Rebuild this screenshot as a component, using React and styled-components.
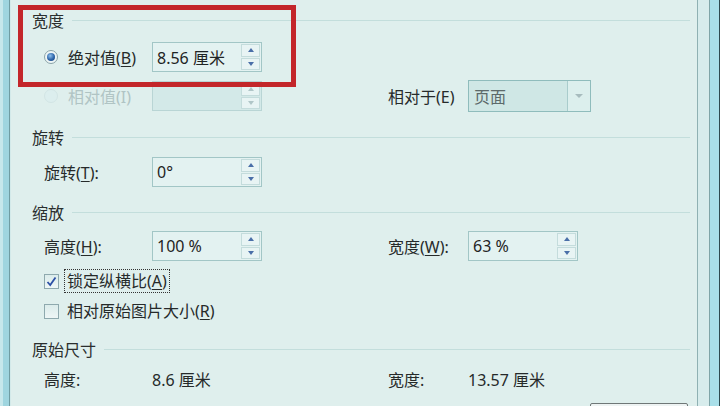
import styled, { createGlobalStyle } from 'styled-components';

const GlobalStyle = createGlobalStyle`
  html, body {
    margin: 0;
    padding: 0;
    overflow: hidden;
  }
  body {
    font-family: "Noto Sans", "Noto Sans CJK SC", sans-serif;
    color: #262a2a;
  }
`;

const Page = styled.div`
  width: 720px;
  height: 406px;
  display: flex;
  background: #dfefed;
  overflow: hidden;
`;

const LeftFrame = styled.div`
  width: 11px;
  flex: none;
  background: linear-gradient(to right, #c6e7eb 0 3px, #9fd5df 3px 9px, #6f9ca2 9px 10px, #d3eaea 10px);
`;

const RightFrame = styled.div`
  width: 23px;
  flex: none;
  background: linear-gradient(to right, #8fb1b3 0 1px, #d7ecec 1px 12px, #7fa5a8 12px 13px, #a9dfe9 13px 22px, #2e4a50 22px);
`;

const Panel = styled.div`
  position: relative;
  flex: 1;
  padding: 8px 7px 0 21px;
  display: flex;
  flex-direction: column;
  font-size: 16px;
`;

const Highlight = styled.div`
  position: absolute;
  left: 7px;
  top: 5px;
  width: 268px;
  height: 72px;
  border: 5px solid #c3262a;
  pointer-events: none;
`;

const SectionHeader = styled.div`
  height: 24px;
  display: flex;
  align-items: center;
  margin-top: ${(p) => p.$mt || 0}px;
  color: #2a2e2e;

  &::after {
    content: '';
    flex: 1;
    height: 1px;
    margin-left: 8px;
    background: #c3dedc;
  }
`;

const Row = styled.div`
  display: grid;
  grid-template-columns: 108px 110px 126px 80px auto;
  align-items: center;
  height: ${(p) => p.$h || 30}px;
  margin-top: ${(p) => p.$mt || 0}px;
  padding-left: 12px;
`;

const Label = styled.span`
  white-space: nowrap;
  color: ${(p) => (p.$disabled ? '#a9bfbf' : '#262a2a')};
`;

const Key = styled.span`
  text-decoration: underline;
  text-underline-offset: 2px;
`;

const RadioLabel = styled.label`
  display: flex;
  align-items: center;
  gap: 10px;
  white-space: nowrap;
  color: ${(p) => (p.$disabled ? '#b0c4c4' : '#262a2a')};
`;

const RadioDot = styled.span`
  width: 14px;
  height: 14px;
  border-radius: 50%;
  box-sizing: border-box;
  border: 1px solid ${(p) => (p.$disabled ? '#d2e5e5' : '#8aa3a8')};
  background: ${(p) => (p.$disabled ? '#dceeee' : '#eef6f6')};
  display: flex;
  align-items: center;
  justify-content: center;

  &::after {
    content: '';
    display: ${(p) => (p.$checked ? 'block' : 'none')};
    width: 8px;
    height: 8px;
    border-radius: 50%;
    background: radial-gradient(circle at 40% 35%, #8fc0ec 0, #2d64a8 55%, #163f78 100%);
  }
`;

const SpinBox = styled.div`
  width: 110px;
  height: 30px;
  box-sizing: border-box;
  border: 1px solid ${(p) => (p.$disabled ? '#b9d5d5' : '#a2c6c6')};
  background: ${(p) => (p.$disabled ? '#d3e9e8' : '#e3f2f1')};
  display: flex;
  align-items: center;
  padding: 0 1px 0 4px;
`;

const SpinValue = styled.span`
  flex: 1;
  white-space: pre;
  color: #1f2424;
`;

const SpinButtons = styled.div`
  width: 19px;
  height: 26px;
  display: flex;
  flex-direction: column;
  gap: 1px;
`;

const SpinButton = styled.div`
  flex: 1;
  box-sizing: border-box;
  border: 1px solid #c4dcdc;
  background: #e8f4f4;
  display: flex;
  align-items: center;
  justify-content: center;

  &::after {
    content: '';
    border-left: 3px solid transparent;
    border-right: 3px solid transparent;
    ${(p) => (p.$down ? 'border-top' : 'border-bottom')}: 4px solid ${(p) => (p.$disabled ? '#b0c6c8' : '#4a6fa8')};
  }
`;

const Select = styled.div`
  width: 123px;
  height: 32px;
  box-sizing: border-box;
  border: 1px solid #8fbcbc;
  background: #cfe7e5;
  display: flex;
  align-items: stretch;
  color: #5c6a6a;
`;

const SelectText = styled.span`
  flex: 1;
  padding-left: 5px;
  display: flex;
  align-items: center;
`;

const SelectArrow = styled.span`
  width: 22px;
  border-left: 1px solid #a9cccc;
  background: #dcefed;
  display: flex;
  align-items: center;
  justify-content: center;

  &::after {
    content: '';
    border-left: 4px solid transparent;
    border-right: 4px solid transparent;
    border-top: 4px solid #a7bcbe;
  }
`;

const CheckRow = styled.label`
  display: flex;
  align-items: center;
  gap: 5px;
  height: 24px;
  margin-top: ${(p) => p.$mt || 0}px;
  padding-left: 12px;
  white-space: nowrap;
`;

const CheckBox = styled.span`
  width: 15px;
  height: 15px;
  box-sizing: border-box;
  border: 1px solid #8ea9ae;
  background: linear-gradient(#dbeceb, #eef6f6);
  display: flex;
  align-items: center;
  justify-content: center;
`;

const CheckText = styled.span`
  padding: 0 2px;
  line-height: 22px;
  border: 1px dotted ${(p) => (p.$focus ? '#333' : 'transparent')};
`;

const Footer = styled.div`
  display: flex;
  justify-content: flex-end;
  margin-top: 12px;
  padding-right: 2px;
`;

const Button = styled.div`
  width: 98px;
  height: 24px;
  box-sizing: border-box;
  border: 1px solid #6f7777;
  border-radius: 2px;
  background: #eef3f3;
`;

function Spin({ value, disabled }) {
  return (
    <SpinBox $disabled={disabled}>
      <SpinValue>{value}</SpinValue>
      <SpinButtons>
        <SpinButton $disabled={disabled} />
        <SpinButton $down $disabled={disabled} />
      </SpinButtons>
    </SpinBox>
  );
}

function Check() {
  return (
    <svg width="11" height="11" viewBox="0 0 11 11">
      <path d="M1.5 6 L4.2 9 L9.5 1.5" fill="none" stroke="#2c50a6" strokeWidth="1.8" />
    </svg>
  );
}

export default function App() {
  return (
    <>
      <GlobalStyle />
      <Page>
        <LeftFrame />
        <Panel>
          <Highlight />
          <SectionHeader>宽度</SectionHeader>
          <Row $mt={10}>
            <RadioLabel>
              <RadioDot $checked />
              <span>绝对值(<Key>B</Key>)</span>
            </RadioLabel>
            <Spin value="8.56 厘米" />
          </Row>
          <Row $mt={8}>
            <RadioLabel $disabled>
              <RadioDot $disabled />
              <span>相对值(I)</span>
            </RadioLabel>
            <Spin value="" disabled />
            <span />
            <Label>相对于(E)</Label>
            <Select>
              <SelectText>页面</SelectText>
              <SelectArrow />
            </Select>
          </Row>

          <SectionHeader $mt={15}>旋转</SectionHeader>
          <Row $mt={8}>
            <Label>旋转(<Key>T</Key>):</Label>
            <Spin value="0°" />
          </Row>

          <SectionHeader $mt={13}>缩放</SectionHeader>
          <Row $mt={7}>
            <Label>高度(<Key>H</Key>):</Label>
            <Spin value="100 %" />
            <span />
            <Label>宽度(<Key>W</Key>):</Label>
            <Spin value="63 %" />
          </Row>
          <CheckRow $mt={8}>
            <CheckBox><Check /></CheckBox>
            <CheckText $focus>锁定纵横比(<Key>A</Key>)</CheckText>
          </CheckRow>
          <CheckRow $mt={6}>
            <CheckBox />
            <CheckText>相对原始图片大小(<Key>R</Key>)</CheckText>
          </CheckRow>

          <SectionHeader $mt={14}>原始尺寸</SectionHeader>
          <Row $mt={6} $h={24}>
            <Label>高度:</Label>
            <Label>8.6 厘米</Label>
            <span />
            <Label>宽度:</Label>
            <Label>13.57 厘米</Label>
          </Row>
          <Footer>
            <Button />
          </Footer>
        </Panel>
        <RightFrame />
      </Page>
    </>
  );
}
